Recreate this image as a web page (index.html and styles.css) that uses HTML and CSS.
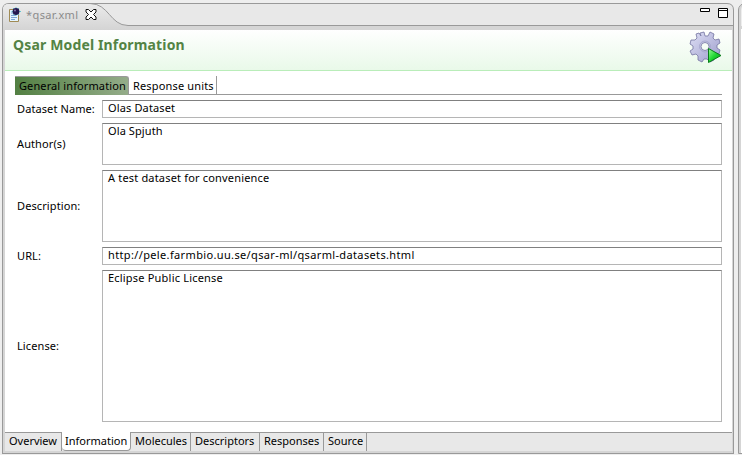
FILE: index.html
```
<!DOCTYPE html>
<html lang="en">
<head>
<meta charset="utf-8">
<title>qsar.xml</title>
<link rel="stylesheet" href="styles.css">
</head>
<body>
<div class="workbench">
<main class="editor">
  <div class="titlebar">
    <svg class="frame" width="732" height="27" viewBox="0 0 732 27">
      <defs><linearGradient id="tab" x2="0" y2="1"><stop offset="0" stop-color="#ebebeb"/><stop offset="1" stop-color="#d4d4d4"/></linearGradient></defs>
      <path d="M.5 27V7Q.5 .5 7 .5H725Q731.500 .5 731.500 7V27" fill="#e8e8e8" stroke="#999"/>
      <path d="M1 27V7Q1 1 7 1H90C108 1 108 22.500 126 22.500H731V27Z" fill="#e8e8e8"/>
      <path d="M1 27V7Q1 1 7 1H90C108 1 108 22.500 126 22.500V27Z" fill="url(#tab)"/>
      <path d="M88 .5C107 .5 108 22.500 126 22.500H731" fill="none" stroke="#999"/>
      <path d="M124 23H731V27H124Z" fill="#d5d5d5"/>
    </svg>
    <svg class="file-icon" width="14" height="16" viewBox="0 0 14 16">
      <path d="M1.500 2.500H10.500V14.500H1.500Z" fill="#e5f5ff" stroke="#a08b55"/>
      <path d="M3 6H6M3 8.500H8M3 10.500H9M3 12.500H7" stroke="#7ea6d6"/>
      <path d="M8 0V9M3.500 4.500H13M5 1L11 8M11 1L5 8" stroke="#65c7d0"/>
      <circle cx="8" cy="4.500" r="3.400" fill="#24184f"/><circle cx="7" cy="3.500" r="1" fill="#8174ac"/>
    </svg>
    <span class="filename">*qsar.xml</span>
    <svg class="close" width="12" height="11" viewBox="0 0 12 11"><path d="M1 .5H3.500L6 3L8.500 .5H11V3L8.500 5.500L11 8V10.500H8.500L6 8L3.500 10.500H1V8L3.500 5.500L1 3Z" fill="#fff" stroke="#111"/></svg>
    <svg class="window-icons" width="29" height="12" viewBox="0 0 29 12"><path d="M.5 1.500H9.500V4.500H.5Z" fill="#fff" stroke="#000"/><path d="M18.500 1.500H27.500V10.500H18.500Z" fill="#fff" stroke="#000"/><path d="M18 3.500H28" stroke="#000"/></svg>
  </div>
  <div class="content">
    <header>
      <h1>Qsar Model Information</h1>
      <svg class="gear" width="34" height="34" viewBox="0 0 34 34">
        <defs><linearGradient id="metal" x2="1" y2="1"><stop stop-color="#dedff5"/><stop offset="1" stop-color="#9c9ccb"/></linearGradient><linearGradient id="play" x2="1" y2="1"><stop stop-color="#9bff98"/><stop offset=".5" stop-color="#20d632"/><stop offset="1" stop-color="#07991c"/></linearGradient></defs>
        <path fill-rule="evenodd" fill="url(#metal)" stroke="#7373a1" stroke-width=".8" stroke-linejoin="round" d="M11 2L15 1L16 5L19 5L21 1L25 3L24 7L26 9L30 8L31 12L28 14L28 17L31 19L30 23L26 23L24 25L25 29L21 31L18 28L15 28L13 31L9 29L9 25L7 23L3 24L1 20L4 18L4 15L1 13L2 9L6 9L8 7L7 3L10 2L12 5ZM16 11.500A4 4 0 1 0 16 19.500A4 4 0 1 0 16 11.500Z"/>
        <circle cx="16" cy="15.500" r="5.500" fill="none" stroke="#a9a9d0"/>
        <path d="M19.500 17.500L32 24.500L19.500 31.500Z" fill="url(#play)" stroke="#087b19"/>
      </svg>
    </header>
    <section class="page">
      <nav class="section-tabs"><div class="selected"><span class="t-general">General information</span></div><div class="response"><span class="t-response">Response units</span></div></nav>
      <div class="form">
        <label>Dataset Name:</label><div class="field"><span class="f-name">Olas Dataset</span></div>
        <label>Author(s)</label><div class="field"><span class="f-author">Ola Spjuth</span></div>
        <label>Description:</label><div class="field"><span class="f-desc">A test dataset for convenience</span></div>
        <label>URL:</label><div class="field"><span class="f-url">http://pele.farmbio.uu.se/qsar-ml/qsarml-datasets.html</span></div>
        <label>License:</label><div class="field"><span class="f-license">Eclipse Public License</span></div>
      </div>
    </section>
    <nav class="page-tabs"><div>Overview</div><div class="active">Information</div><div>Molecules</div><div>Descriptors</div><div>Responses</div><div>Source</div></nav>
  </div>
</main>
<aside class="neighbor"></aside>
</div>
</body>
</html>
```
FILE: styles.css
```
* { box-sizing: border-box; }
body { margin: 0; width: 742px; height: 455px; overflow: hidden; background: #eee; color: #000; font: 11px/14px "Noto Sans", sans-serif; }
.workbench { display: flex; gap: 4px; height: 455px; padding: 3px 0 1px 2px; }
.editor { width: 732px; height: 451px; flex: none; }
.neighbor { width: 14px; flex: none; border: 1px solid #999; border-radius: 7px 0 0 0; background: linear-gradient(#eee 0 22px, #d5d5d5 22px 25px, #fff 25px); box-shadow: inset 2px 0 #d5d5d5; }
.titlebar { position: relative; height: 26px; display: flex; align-items: flex-start; padding: 4px 5px 0 6px; }
.frame { position: absolute; left: 0; top: 0; }
.titlebar > :not(.frame) { position: relative; }
.filename { width: 53px; margin: 1px 0 0 4px; color: #8b8b8b; letter-spacing: .4px; }
.close { margin: 2px 0 0 6px; }
.window-icons { margin-left: auto; }
.content { height: 425px; border: solid #999; border-width: 0 1px 1px; padding: 0 1px 2px 2px; background: #d5d5d5; display: flex; flex-direction: column; }
header { height: 42px; flex: none; border-bottom: 1px solid #b9edb9; background: linear-gradient(#fff, #e9f9e9); display: flex; justify-content: space-between; padding: 2px 9px 0 8px; }
h1 { margin: 5px 0 0; color: #538344; font-size: 14px; line-height: 18px; letter-spacing: .15px; white-space: nowrap; }
.page { background: #fff; height: 361px; flex: none; padding: 5px 10px 10px; }
.section-tabs { display: flex; height: 19px; border-bottom: 1px solid #999; }
.section-tabs div { padding: 2px 0 0 4px; white-space: nowrap; }
.section-tabs .selected { width: 114px; height: 19px; border: solid #999; border-width: 1px 1px 0 0; border-radius: 0 3px 0 0; background: linear-gradient(90deg, #538043, #94ac89); }
.section-tabs .response { width: 88px; border-right: 1px solid #999; padding-top: 3px; }
.t-general { letter-spacing: .11px; }
.t-response { letter-spacing: .16px; }
.form { display: grid; grid-template-columns: 85px 620px; grid-template-rows: 18px 42px 72px 18px 152px; row-gap: 5px; margin-top: 5px; padding-left: 2px; }
label { align-self: center; white-space: nowrap; letter-spacing: .1px; }
.field { border: 1px solid #b5b5b5; border-top-color: #808080; padding: 0 5px; line-height: 13px; white-space: nowrap; }
.f-name { letter-spacing: .14px; }
.f-author { letter-spacing: .1px; }
.f-desc { letter-spacing: .18px; }
.f-url { letter-spacing: .36px; }
.f-license { letter-spacing: .2px; }
.page-tabs { display: flex; height: 19px; flex: none; background: #e8e8e8; border-top: 1px solid #999; }
.page-tabs div { height: 18px; padding: 1px 0 0 4px; border-right: 1px solid #999; white-space: nowrap; }
.page-tabs div:nth-child(1) { width: 57px; }
.page-tabs div:nth-child(2) { width: 69px; }
.page-tabs div:nth-child(3) { width: 60px; }
.page-tabs div:nth-child(4) { width: 69px; }
.page-tabs div:nth-child(5) { width: 64px; }
.page-tabs div:nth-child(6) { width: 43px; }
.page-tabs .active { height: 19px; margin-top: -1px; padding: 2px 0 0 3px; background: #fff; border-bottom: 1px solid #999; border-radius: 0 0 4px 4px; }
```
